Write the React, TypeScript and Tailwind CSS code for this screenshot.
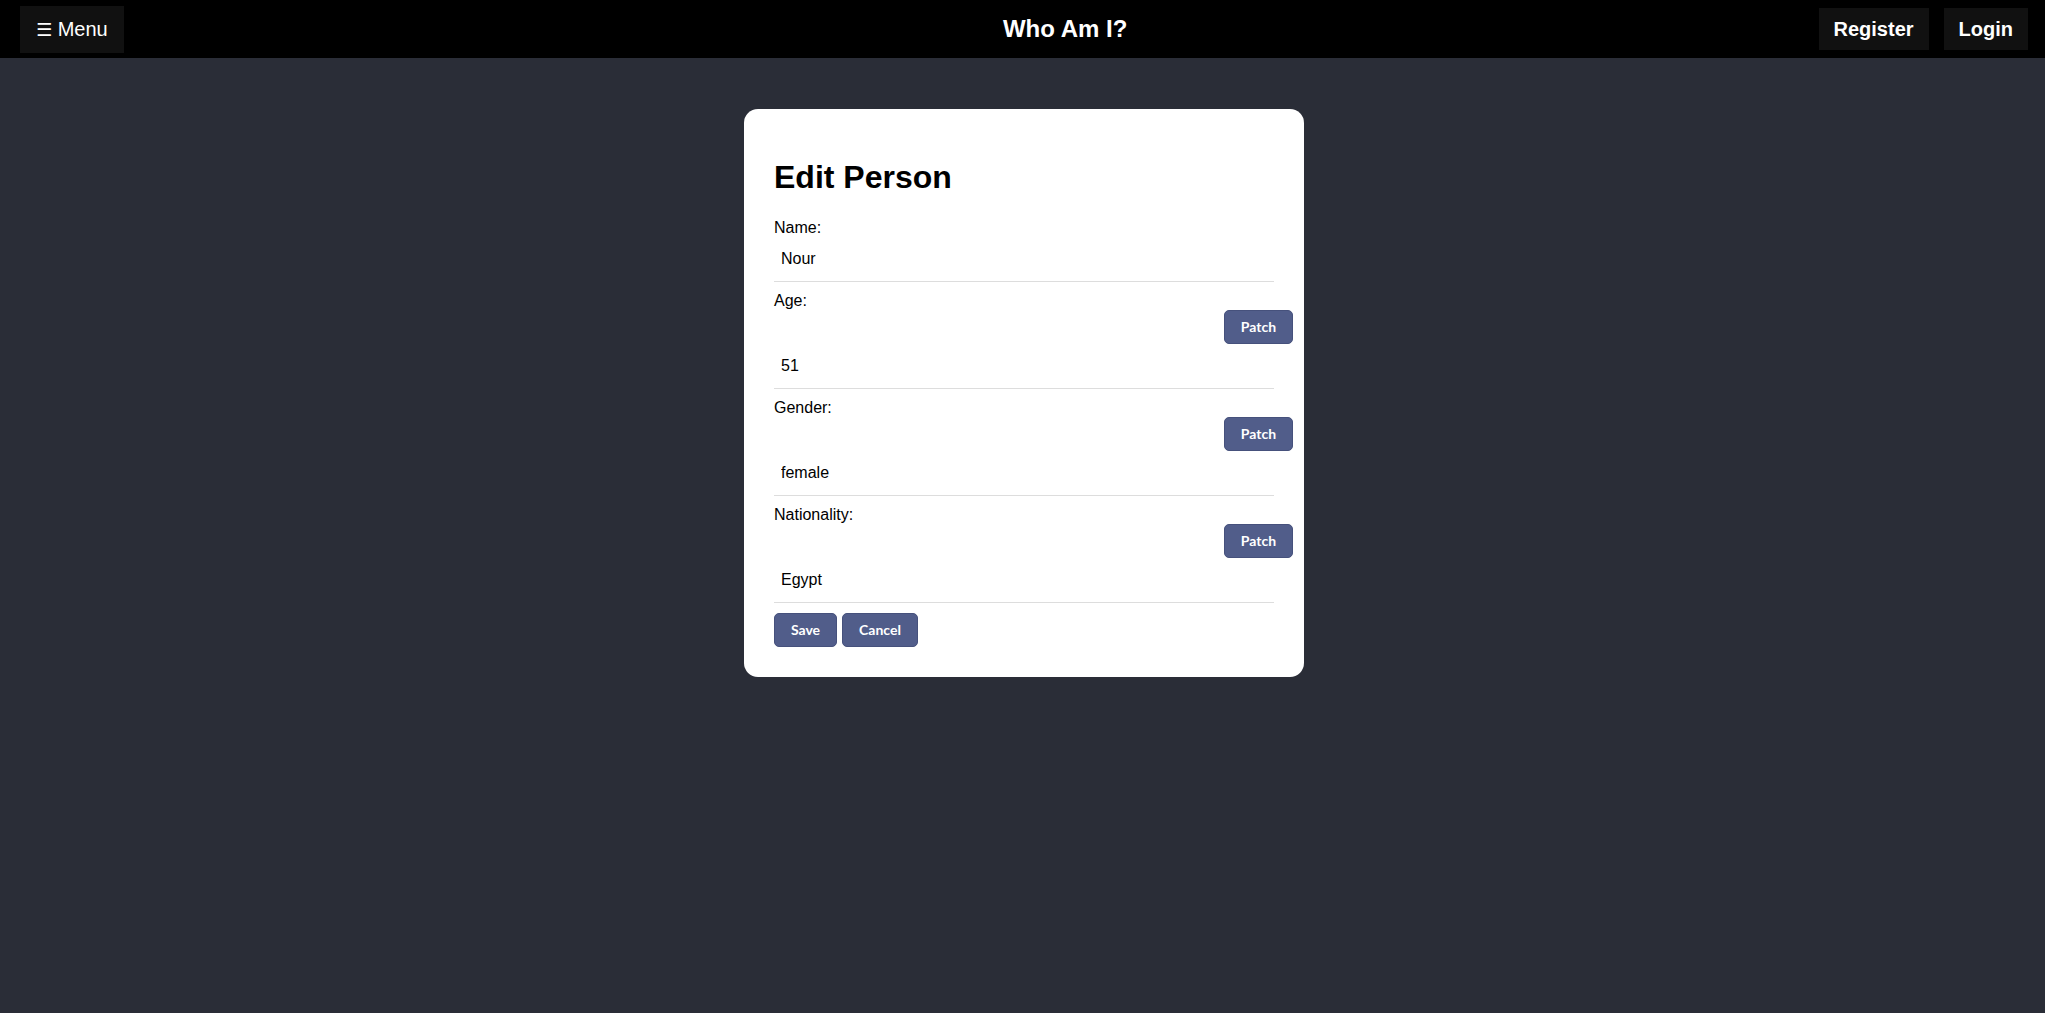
import React, { useState } from "react";

type Field = {
  key: string;
  label: string;
  patch: boolean;
};

const fields: Field[] = [
  { key: "name", label: "Name:", patch: false },
  { key: "age", label: "Age:", patch: true },
  { key: "gender", label: "Gender:", patch: true },
  { key: "nationality", label: "Nationality:", patch: true },
];

const btn =
  "h-[34px] rounded-[5px] border border-[#46517c] bg-[#515d8a] text-white text-[14px] font-bold font-['Lato',sans-serif] leading-none";

const App: React.FC = () => {
  const [person, setPerson] = useState<Record<string, string>>({
    name: "Nour",
    age: "51",
    gender: "female",
    nationality: "Egypt",
  });

  return (
    <div className="min-h-screen bg-[#2a2d37] font-['Liberation_Sans',Arial,sans-serif]">
      <header className="h-[58px] bg-black flex items-center pl-[20px] pr-[17px]">
        <button className="h-[47px] px-[16px] bg-[#111111] text-white text-[20px] leading-none">
          <span className="font-['DejaVu_Sans',sans-serif] text-[18px]">☰</span> Menu
        </button>
        <div className="flex-1 text-center pl-[188px]">
          <h1 className="text-white text-[24px] font-bold">Who Am I?</h1>
        </div>
        <div className="flex gap-[15px]">
          <button className="h-[42px] px-[15px] bg-[#111111] text-white text-[20px] font-bold leading-none">
            Register
          </button>
          <button className="h-[42px] px-[15px] bg-[#111111] text-white text-[20px] font-bold leading-none">
            Login
          </button>
        </div>
      </header>

      <div className="flex justify-center pt-[51px] pl-[3px]">
        <div className="w-[560px] bg-white rounded-[14px] p-[30px] text-black">
          <h2 className="mt-[20px] mb-[22px] text-[32px] leading-[37px] font-bold">
            Edit Person
          </h2>
          {fields.map((f) => (
            <div key={f.key} className="mb-[9px]">
              <label className="block text-[16px] leading-[19px]">{f.label}</label>
              {f.patch && (
                <div className="flex justify-end -mr-[19px]">
                  <button className={`${btn} w-[69px]`}>Patch</button>
                </div>
              )}
              <input
                className="block w-full pt-[12px] pb-[13px] px-[7px] text-[16px] leading-[19px] border-b border-[#dddddd] outline-none"
                value={person[f.key]}
                onChange={(e) => setPerson({ ...person, [f.key]: e.target.value })}
              />
            </div>
          ))}
          <div className="flex gap-[5px] pt-[1px]">
            <button className={`${btn} w-[63px]`}>Save</button>
            <button className={`${btn} w-[76px]`}>Cancel</button>
          </div>
        </div>
      </div>
    </div>
  );
};

export default App;
